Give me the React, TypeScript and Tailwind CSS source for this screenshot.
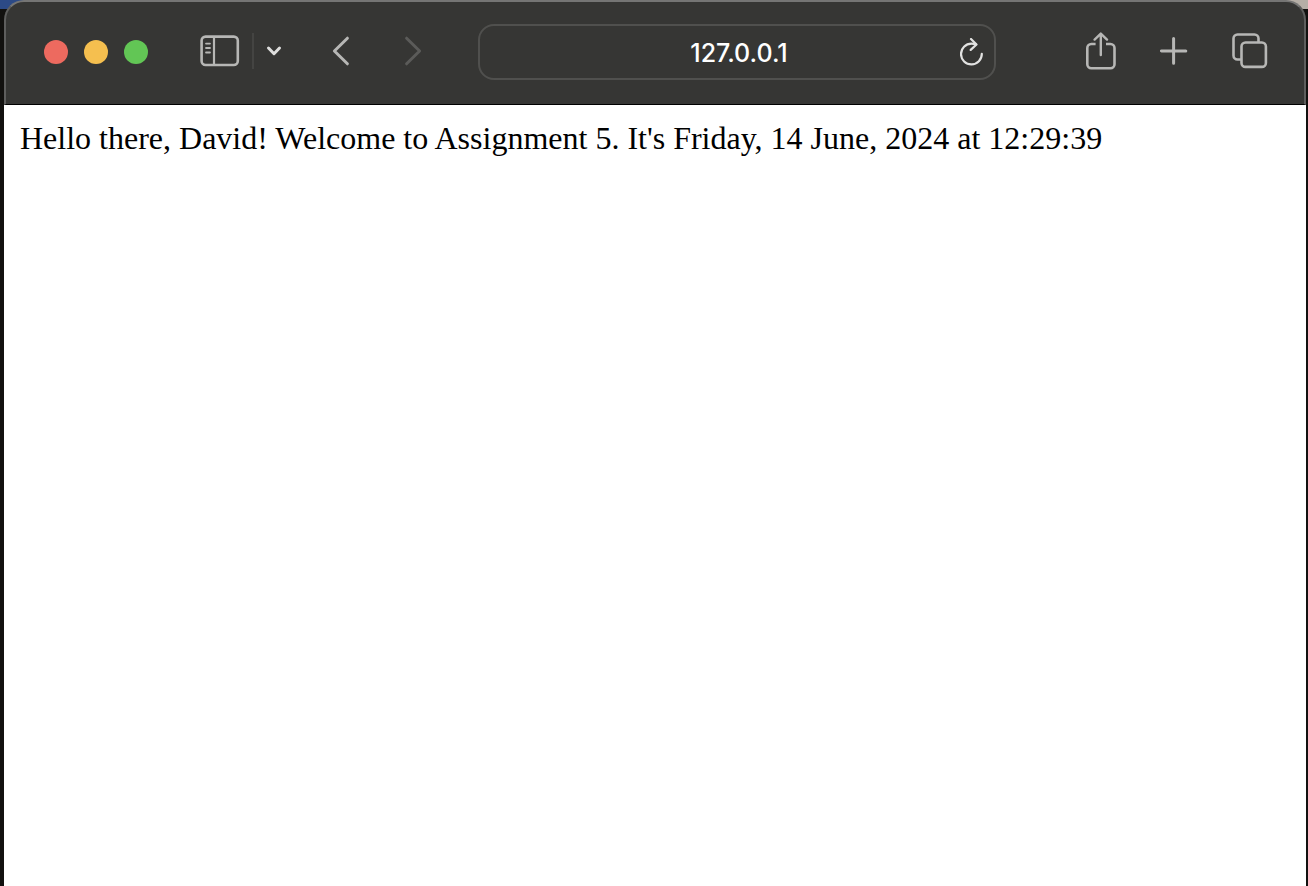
import React from "react";

function IconButton({
  label,
  className = "",
  disabled = false,
  children,
}: {
  label: string;
  className?: string;
  disabled?: boolean;
  children: React.ReactNode;
}) {
  return (
    <button type="button" aria-label={label} disabled={disabled} className={`shrink-0 ${className}`}>
      {children}
    </button>
  );
}

const stroke = {
  fill: "none",
  stroke: "currentColor",
  strokeLinecap: "round",
  strokeLinejoin: "round",
} as const;

function SidebarIcon() {
  return (
    <svg width="40" height="32" viewBox="0 0 40 32" {...stroke} strokeWidth="2.6">
      <rect x="1.6" y="1.6" width="36.2" height="28.4" rx="4" />
      <path d="M14 2v28" strokeWidth="2.2" strokeLinecap="butt" />
      <path d="M6 8.6h4M6 13h4M6 17.5h4" strokeWidth="1.8" />
    </svg>
  );
}

function ChevronDownIcon() {
  return (
    <svg width="16" height="12" viewBox="0 0 16 12" {...stroke} strokeWidth="3">
      <path d="M2.5 3 8 8.7 13.5 3" />
    </svg>
  );
}

function BackIcon() {
  return (
    <svg width="18" height="30" viewBox="0 0 18 30" {...stroke} strokeWidth="3">
      <path d="M15.4 2.2 2.4 15l13 12.8" />
    </svg>
  );
}

function ForwardIcon() {
  return (
    <svg width="18" height="30" viewBox="0 0 18 30" {...stroke} strokeWidth="3">
      <path d="m2.6 2.2 13 12.8-13 12.8" />
    </svg>
  );
}

function ReloadIcon() {
  return (
    <svg width="24" height="28" viewBox="0 0 24 28" {...stroke} strokeWidth="2.2">
      <path d="M21.8 15.8A10.4 10.4 0 1 1 11.4 5.6c1.7 0 3.1.2 4.6.8" />
      <path d="m11 1 5.5 5.5-5.8 5.4" />
    </svg>
  );
}

function ShareIcon() {
  return (
    <svg width="30" height="38" viewBox="0 0 30 38" {...stroke} strokeWidth="2.6">
      <path d="M9.6 12H5.3a4 4 0 0 0-4 4v16.2a4 4 0 0 0 4 4h19.2a4 4 0 0 0 4-4V16a4 4 0 0 0-4-4H20" strokeLinecap="butt" />
      <path d="M14.8 23V2M8.6 7.6l6.2-6 6.2 6" strokeWidth="2.4" />
    </svg>
  );
}

function PlusIcon() {
  return (
    <svg width="28" height="28" viewBox="0 0 28 28" {...stroke} strokeWidth="3">
      <path d="M13.6 1.6v24.6M1.4 13.9h24.4" />
    </svg>
  );
}

function TabsIcon() {
  return (
    <svg width="36" height="36" viewBox="0 0 36 36" {...stroke} strokeWidth="2.6">
      <path d="M9 26.5H5.5a4 4 0 0 1-4-4v-17a4 4 0 0 1 4-4h17a4 4 0 0 1 4 4V9" strokeLinecap="butt" />
      <rect x="9.5" y="9.5" width="24.4" height="24.4" rx="4" />
    </svg>
  );
}

function Toolbar() {
  return (
    <header className="flex h-[105px] items-center rounded-t-[20px] border-x-2 border-t-2 border-b border-x-[#5e5e5d] border-t-[#757574] border-b-black bg-[#363634] pr-9 pb-0.5 pl-[38px] text-[#b7b7b5]">
      <div className="flex shrink-0 gap-4">
        <button type="button" aria-label="Close" className="size-6 rounded-full bg-[#ed6a5f]" />
        <button type="button" aria-label="Minimise" className="size-6 rounded-full bg-[#f5bf4f]" />
        <button type="button" aria-label="Zoom" className="size-6 rounded-full bg-[#62c655]" />
      </div>
      <div className="ml-[52px] flex shrink-0 items-center pb-0.5">
        <IconButton label="Show sidebar"><SidebarIcon /></IconButton>
        <div className="ml-3 h-9 w-0.5 bg-[#444442]" />
        <IconButton label="Tab groups" className="ml-3 text-[#dededd]"><ChevronDownIcon /></IconButton>
      </div>
      <div className="ml-[50px] flex shrink-0 gap-[54px] pb-0.5">
        <IconButton label="Back"><BackIcon /></IconButton>
        <IconButton label="Forward" disabled className="text-[#5b5b59]"><ForwardIcon /></IconButton>
      </div>
      <form className="relative ml-14 flex min-w-0 flex-1" onSubmit={(e) => e.preventDefault()}>
        <input
          type="text"
          aria-label="Address"
          defaultValue="127.0.0.1"
          className="h-14 w-full rounded-[16px] border-2 border-[#50504e] bg-transparent pt-0.5 pl-1 text-center font-['Inter',sans-serif] text-[25px] font-medium text-white outline-none"
        />
        <button type="button" aria-label="Reload" className="absolute top-3.5 right-3 text-[#e2e2e1]">
          <ReloadIcon />
        </button>
      </form>
      <div className="ml-[90px] flex shrink-0 items-center gap-11 pb-0.5">
        <IconButton label="Share"><ShareIcon /></IconButton>
        <IconButton label="New tab"><PlusIcon /></IconButton>
        <IconButton label="Tab overview"><TabsIcon /></IconButton>
      </div>
    </header>
  );
}

export default function App() {
  return (
    <div className="flex min-h-screen flex-col bg-[linear-gradient(to_right,#2c4a86_50%,#b5aea6_50%)] bg-[length:100%_9px] bg-no-repeat bg-[#12110f] pr-0.5 pl-1">
      <Toolbar />
      <main className="flex-1 bg-white p-4 font-['Liberation_Serif',serif] text-[32px] leading-[34px] text-black">
        <p>Hello there, David! Welcome to Assignment 5. It's Friday, 14 June, 2024 at 12:29:39</p>
      </main>
    </div>
  );
}
